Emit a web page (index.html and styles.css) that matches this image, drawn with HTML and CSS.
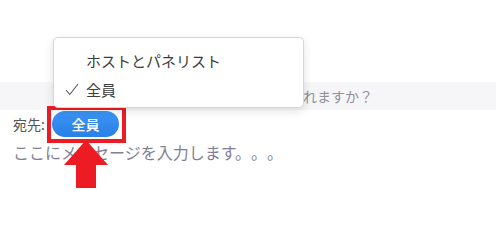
FILE: index.html
```html
<!DOCTYPE html>
<html lang="ja">
<head>
<meta charset="utf-8">
<link rel="stylesheet" href="styles.css">
</head>
<body>
<div class="page">
  <div class="spacer"></div>
  <div class="band"><span class="band-text">ご質問を送信されますか？</span></div>
  <div class="to-row">
    <span class="to-label">宛先:</span>
    <span class="pill-wrap">
      <span class="pill">全員</span>
      <span class="frame"></span>
    </span>
  </div>
  <div class="placeholder">ここにメッセージを入力します。。。</div>

  <div class="menu">
    <div class="menu-item">ホストとパネリスト</div>
    <div class="menu-item checked">
      <svg class="check" width="14" height="13" viewBox="0 0 14 13"><path d="M1 7 L4.8 11.5 L13 1" fill="none" stroke="#555" stroke-width="1.1"/></svg>
      全員
    </div>
  </div>

  <svg class="arrow" width="44" height="48" viewBox="0 0 44 48"><polygon points="22,0 44,25 32,25 32,48 12,48 12,25 0,25" fill="#ed1c24"/></svg>
</div>
</body>
</html>
```
FILE: styles.css
```css
* { box-sizing: border-box; }
html, body { margin: 0; padding: 0; background: #fff; }
body {
  font-family: "Noto Sans CJK JP", "Noto Sans", sans-serif;
  width: 496px;
  height: 241px;
  overflow: hidden;
  text-spacing-trim: space-all;
}
.page { position: relative; width: 496px; height: 241px; }
.spacer { height: 82px; }
.band {
  height: 28px;
  background: #f6f6f9;
  display: flex;
  align-items: center;
  justify-content: flex-end;
  padding-right: 123px;
}
.band-text { font-size: 14px; color: #8e8e96; line-height: 1; }
.to-row {
  display: flex;
  align-items: center;
  gap: 7px;
  padding: 1px 0 0 13px;
  height: 27px;
}
.to-label { font-size: 14px; color: #555; line-height: 1; }
.pill-wrap { position: relative; display: inline-flex; }
.pill {
  width: 67px;
  height: 26px;
  border-radius: 13px;
  background: linear-gradient(#3b94f4, #2a80e6);
  color: #fff;
  font-size: 14px;
  font-weight: 500;
  display: flex;
  align-items: center;
  justify-content: center;
  line-height: 1;
}
.frame {
  position: absolute;
  left: -5px;
  top: -5px;
  width: 79px;
  height: 37px;
  border: 4px solid #ed1c24;
}
.placeholder {
  margin-top: 5px;
  padding-left: 13px;
  font-size: 16px;
  line-height: 20px;
  color: #7e8094;
}
.menu {
  position: absolute;
  left: 53px;
  top: 37px;
  width: 251px;
  height: 71px;
  background: #fff;
  border: 1px solid #d6d6d6;
  border-radius: 5px;
  box-shadow: 0 3px 10px rgba(0,0,0,0.12);
  padding-top: 8px;
}
.menu-item {
  position: relative;
  height: 29px;
  padding-left: 32px;
  font-size: 15px;
  color: #3d3d3d;
  display: flex;
  align-items: center;
  line-height: 1;
}
.check { position: absolute; left: 11px; top: 8px; }
.arrow { position: absolute; left: 64px; top: 140px; }
```
